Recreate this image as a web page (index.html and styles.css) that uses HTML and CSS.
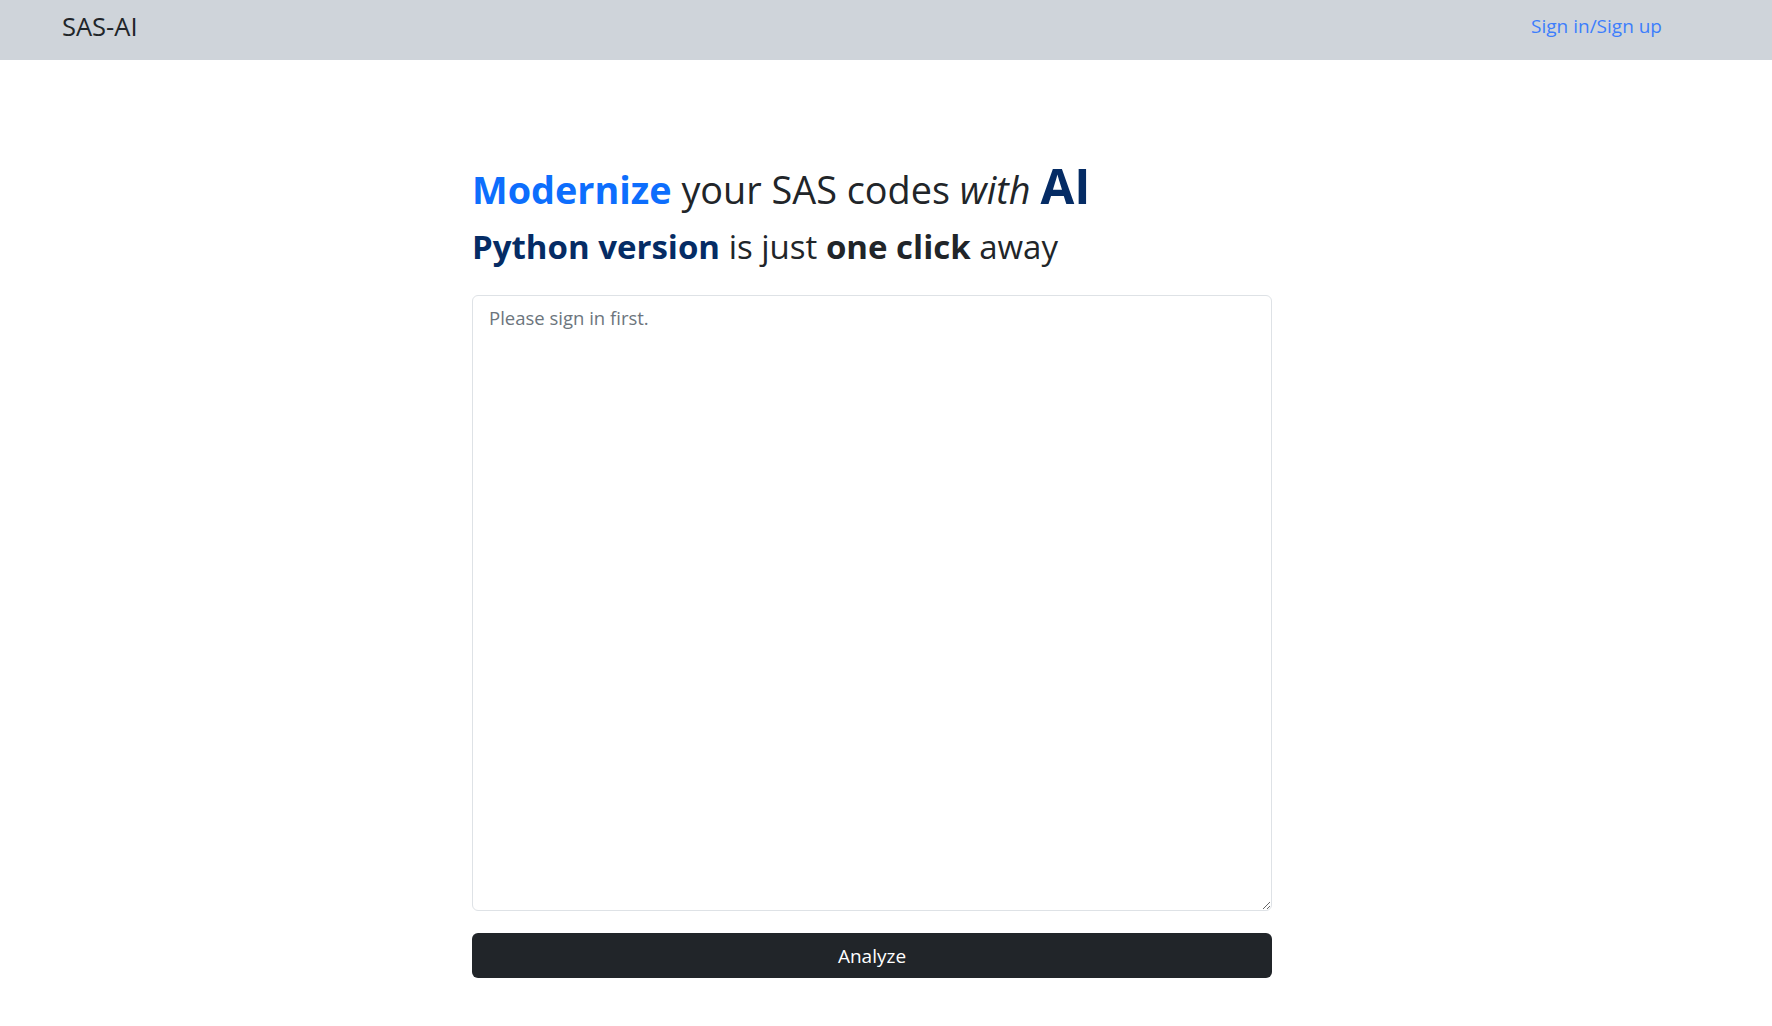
FILE: index.html
```html
<!DOCTYPE html>
<html lang="en">
<head>
<meta charset="utf-8">
<title>SAS-AI</title>
<link rel="stylesheet" href="styles.css">
</head>
<body>
<nav class="navbar">
  <a class="brand" href="#">SAS-AI</a>
  <a class="signin" href="#">Sign in/Sign up</a>
</nav>
<main class="main">
  <div class="content">
    <h1 class="title"><span class="accent">Modernize</span> your SAS codes <em>with</em> <strong class="ai">AI</strong></h1>
    <h2 class="subtitle"><strong class="navy">Python version</strong> is just <strong>one click</strong> away</h2>
    <textarea class="code" placeholder="Please sign in first."></textarea>
    <button class="analyze" type="button">Analyze</button>
  </div>
</main>
</body>
</html>
```
FILE: styles.css
```css
* { box-sizing: border-box; }
html, body { margin: 0; padding: 0; }
body {
  font-family: "Open Sans", "Noto Sans", sans-serif;
  color: #212529;
  background: #fff;
}
.navbar {
  height: 60px;
  background: #cfd4da;
  display: flex;
  align-items: center;
  justify-content: space-between;
  padding: 0 110px 9px 62px;
}
.brand {
  font-size: 25.5px;
  color: #212529;
  text-decoration: none;
}
.signin {
  font-size: 19px;
  color: #3d7efc;
  text-decoration: none;
}
.main {
  width: 830px;
  margin: 0 auto;
  padding-left: 1px;
  padding-right: 24px;
  padding-top: 97px;
}
.content { width: 800px; }
.title {
  margin: 0;
  font-size: 37.8px;
  font-weight: 400;
  line-height: 56px;
}
.accent { color: #0d6efd; font-weight: 700; }
.ai { color: #052c65; font-size: 49px; font-weight: 700; }
.subtitle {
  margin: 0;
  font-size: 33px;
  font-weight: 400;
  line-height: 58px;
}
.subtitle strong { font-weight: 700; }
.navy { color: #052c65; }
.code {
  display: block;
  width: 800px;
  height: 616px;
  margin-top: 19px;
  border: 1px solid #dee2e6;
  border-radius: 6px;
  padding: 9px 16px;
  font-family: inherit;
  font-size: 18.5px;
  color: #212529;
}
.code::placeholder { color: #6c757d; }
.analyze {
  display: block;
  width: 800px;
  height: 45px;
  margin-top: 22px;
  background: #212529;
  color: #fff;
  border: 0;
  border-radius: 6px;
  font-family: inherit;
  font-size: 19px;
}
```
